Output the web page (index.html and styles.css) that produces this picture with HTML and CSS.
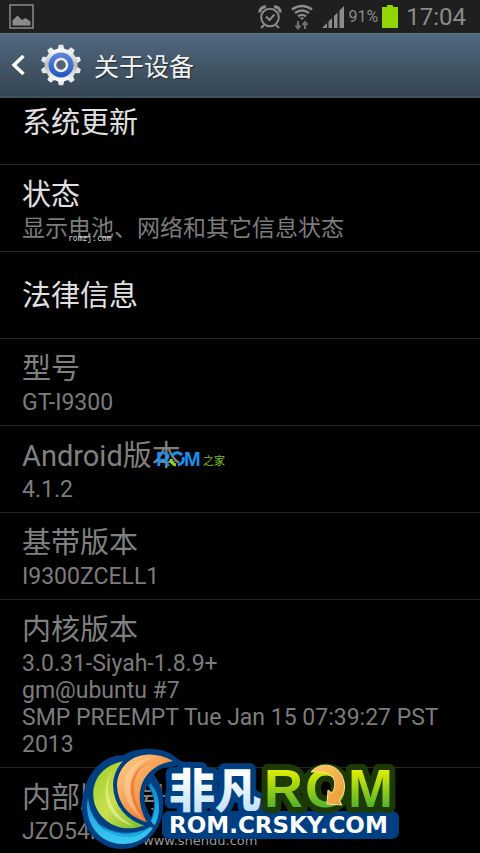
FILE: index.html
```html
<!DOCTYPE html>
<html lang="zh-CN">
<head>
  <meta charset="UTF-8" />
  <meta name="viewport" content="width=device-width, initial-scale=1.0"/>
  <title>关于设备</title>
  <link rel="stylesheet" href="styles.css">
</head>
<body>
  <div class="screen">
    <div class="status-bar">
      <svg class="picture-icon" width="26" height="26" viewBox="0 0 26 26">
        <rect x="1" y="1" width="23" height="23" fill="none" stroke="#8b8b8b" stroke-width="1.5"/>
        <path d="M3.500 21.500V16.500L8.500 11.500L13 16L16.500 14L21.500 17.500V21.500Z" fill="#8b8b8b"/>
      </svg>
      <div class="status-icons">
        <svg width="24" height="26" viewBox="0 0 24 26" fill="none" stroke="#8b8b8b" stroke-width="2">
          <circle cx="12" cy="13.500" r="8.800"/>
          <path d="M8 12.500l3.500 3.500 5-5.500M6 21l-3 3M18 21l3 3"/>
          <path d="M2 8.500A5 5 0 0 1 8 3M22 8.500A5 5 0 0 0 16 3" stroke-width="3"/>
        </svg>
        <svg class="wifi-icon" width="24" height="26" viewBox="0 0 24 26" fill="none" stroke="#8b8b8b" stroke-width="2.400">
          <path d="M2 5.500Q12-1.500 22 5.500M5 9Q12 4 19 9M8 12.300Q12 9.500 16 12.300"/>
          <path d="M9.500 13.500h5L12 16Z" fill="#8b8b8b" stroke="none"/>
          <path d="M8 17v7M5.500 21.500l2.500 3 2.500-3M15 25v-7M12.500 21l2.500-3 2.500 3" stroke="#6e6e6e" stroke-width="2"/>
        </svg>
        <svg width="23" height="26" viewBox="0 0 23 26" fill="#8b8b8b">
          <path d="M0 24L5 19V24ZM6.500 17.500L10 14V24H6.500ZM12 12L15.500 8.500V24H12ZM17.500 6.500L22 2V24H17.500Z"/>
        </svg>
        <span class="percent">91%</span>
        <svg width="16" height="26" viewBox="0 0 16 26" fill="#93d500">
          <path d="M0 3H5V1H11V3H16V24H0Z"/>
        </svg>
        <span class="clock">17:04</span>
      </div>
    </div>

    <div class="header">
      <button class="back" aria-label="返回">
        <svg width="14" height="22" viewBox="0 0 14 22" fill="none" stroke="#fff" stroke-width="3.500">
          <path d="M12.500 2L3 11l9.500 9"/>
        </svg>
      </button>
      <svg class="gear" width="42" height="42" viewBox="0 0 42 42">
        <defs>
          <linearGradient id="metal" x1="0" y1="0" x2="0" y2="1">
            <stop offset="0" stop-color="#fff"/>
            <stop offset=".5" stop-color="#b9bbbe"/>
            <stop offset="1" stop-color="#fff"/>
          </linearGradient>
          <linearGradient id="blue" x1="0" y1="0" x2="0" y2="1">
            <stop offset="0" stop-color="#6286da"/>
            <stop offset="1" stop-color="#2256bc"/>
          </linearGradient>
          <path id="tooth" d="M17.500 6L18.800 .8H23.200L24.500 6Z"/>
        </defs>
        <g fill="#e7e8ea">
          <use href="#tooth"/>
          <use href="#tooth" transform="rotate(36 21 21)"/>
          <use href="#tooth" transform="rotate(72 21 21)"/>
          <use href="#tooth" transform="rotate(108 21 21)"/>
          <use href="#tooth" transform="rotate(144 21 21)"/>
          <use href="#tooth" transform="rotate(180 21 21)"/>
          <use href="#tooth" transform="rotate(216 21 21)"/>
          <use href="#tooth" transform="rotate(252 21 21)"/>
          <use href="#tooth" transform="rotate(288 21 21)"/>
          <use href="#tooth" transform="rotate(324 21 21)"/>
        </g>
        <circle cx="21" cy="21" r="16.500" fill="url(#metal)"/>
        <circle cx="21" cy="21" r="12.500" fill="url(#blue)"/>
        <circle cx="21" cy="21" r="6" fill="#526274" stroke="#e9edf3" stroke-width="2.500"/>
      </svg>
      <h1>关于设备</h1>
    </div>

    <ul class="list">
      <li><a class="row single first" href="#"><span class="title">系统更新</span></a></li>
      <li><a class="row" href="#"><span class="title">状态</span><span class="summary">显示电池、网络和其它信息状态</span></a></li>
      <li><a class="row single" href="#"><span class="title">法律信息</span></a></li>
      <li class="row info"><span class="title">型号</span><span class="summary">GT-I9300</span></li>
      <li class="row info"><span class="title">Android版本</span><span class="summary">4.1.2</span></li>
      <li class="row info"><span class="title">基带版本</span><span class="summary">I9300ZCELL1</span></li>
      <li class="row info"><span class="title">内核版本</span><span class="summary">3.0.31-Siyah-1.8.9+<br>gm@ubuntu #7<br>SMP PREEMPT Tue Jan 15 07:39:27 PST 2013</span></li>
      <li class="row info"><span class="title">内部版本号</span><span class="summary">JZO54K</span></li>
    </ul>

    <!-- watermarks on top of the list -->
    <span class="mark mark-romzj">romzj.com</span>
    <span class="mark mark-shendu">www.shendu.com</span>
    <svg class="mark mark-rom" width="76" height="26" viewBox="0 0 76 26">
      <g class="rom-small">
        <text x="1" y="19">R</text>
        <text x="29" y="19">M</text>
      </g>
      <g fill="none" stroke-width="3">
        <path d="M17 9A6 6 0 0 1 27 8" stroke="#1b8fef"/>
        <path d="M28 10A6 6 0 0 1 23 18" stroke="#1b8fef"/>
        <path d="M16 12A6 6 0 0 0 21 18" stroke="#8fd71d"/>
      </g>
      <text class="zhijia" x="48" y="18">之家</text>
    </svg>

    <svg class="mark mark-crsky" width="320" height="106" viewBox="0 0 320 106">
      <defs>
        <linearGradient id="leaf" x1="0" y1="0" x2="1" y2="1">
          <stop offset="0" stop-color="#9dcc25"/>
          <stop offset=".5" stop-color="#c8df50"/>
          <stop offset="1" stop-color="#74b82a"/>
        </linearGradient>
        <linearGradient id="flame" x1="0" y1="0" x2="1" y2="1">
          <stop offset="0" stop-color="#ffd28c"/>
          <stop offset=".5" stop-color="#f59a4b"/>
          <stop offset="1" stop-color="#e94e1b"/>
        </linearGradient>
        <linearGradient id="wave" x1="0" y1="0" x2="0" y2="1">
          <stop offset="0" stop-color="#0788d3"/>
          <stop offset="1" stop-color="#3ccbf0"/>
        </linearGradient>
        <linearGradient id="ice" x1="0" y1="0" x2="0" y2="1">
          <stop offset=".3" stop-color="#fff"/>
          <stop offset="1" stop-color="#b5dbf8"/>
        </linearGradient>
        <linearGradient id="lime" x1="0" y1="0" x2="0" y2="1">
          <stop offset=".2" stop-color="#e0ee00"/>
          <stop offset=".8" stop-color="#55b52c"/>
        </linearGradient>
        <linearGradient id="gold" x1="0" y1="0" x2="1" y2="1">
          <stop offset="0" stop-color="#ffc95f"/>
          <stop offset="1" stop-color="#e99a38"/>
        </linearGradient>
      </defs>

      <path fill-rule="evenodd" d="M0 61C0 30 18 8 42 8C56-1 86-1 96 13Q98 20 88 20C80 20 75 22 72 28C80 38 82 48 81 61C80 84 62 102 40 102C18 102 0 84 0 61ZM64 38C71 45 75 56 69 70C62 60 60 48 64 38Z" fill="#003f82"/>
      <path d="M6 50C1 75 17 97 41 97C63 97 78 79 77 59C77 49 73 41 68 36C67 38 67 39 68 41C75 53 74 67 66 79C54 91 35 91 22 82C13 75 7 64 6 50Z" fill="url(#wave)"/>
      <path d="M7 60C14 84 42 92 66 80C54 97 20 92 7 60Z" fill="#0878c2"/>
      <path d="M18 77C30 88 46 89 63 83C50 94 30 92 18 77Z" fill="#1dace0"/>
      <path d="M43 14C16 18 7 40 13 58C20 77 42 87 63 78C37 67 28 39 43 14Z" fill="url(#leaf)" stroke="#003f82" stroke-width="8" paint-order="stroke"/>
      <path d="M36 18C18 34 24 66 52 79C22 73 14 38 36 18Z" fill="#eef49c" opacity=".65"/>
      <path d="M91 14C63 -1 37 12 35 37C35 58 49 71 65 75C51 52 56 20 91 14Z" fill="url(#flame)" stroke="#003f82" stroke-width="8" paint-order="stroke"/>
      <path d="M80 10C49 10 37 42 62 73C28 49 40 8 80 10Z" fill="#fff" opacity=".25"/>
      <path d="M76 13C49 17 44 48 65 75C39 51 45 17 76 13Z" fill="#ef7130" opacity=".7"/>

      <rect x="80" y="64" width="237" height="28" rx="7" fill="#003f82"/>
      <text class="feifan" x="87" y="60">非凡</text>
      <g class="rom-big">
        <text x="182" y="60">R</text>
        <text x="223" y="60">O</text>
        <text x="266" y="60">M</text>
      </g>
      <path d="M229 25C239 13 259 17 262 35C264 43 260 50 257 53L260 58L245 57L246 43L250 46C254 40 254 31 248 28C242 24 237 25 229 25Z" fill="url(#gold)" stroke="#ffdf9a" stroke-width="1"/>
      <text class="domain" x="87" y="86">ROM.CRSKY.COM</text>
    </svg>
  </div>
</body>
</html>
```
FILE: styles.css
```css
* {
  box-sizing: border-box;
}

body {
  margin: 0;
  background: black;
  color: #e6e6e6;
  font-family: Roboto, "Noto Sans CJK SC", sans-serif;
}

.screen {
  position: relative;
  height: 100vh;
  overflow: hidden;
}

.status-bar {
  display: flex;
  align-items: center;
  justify-content: space-between;
  height: 33px;
  padding: 0 14px 0 9px;
  background: #1f1f1f;
  color: #8b8b8b;
}

.status-icons {
  display: flex;
  align-items: center;
  gap: 4px;
}

.status-icons svg:first-child {
  margin-right: 4px;
}

.wifi-icon {
  margin-right: 4px;
}

.percent {
  font-size: 16px;
}

.clock {
  padding-left: 4px;
  font-size: 24px;
}

.header {
  display: flex;
  align-items: center;
  height: 65px;
  padding-left: 11px;
  background: linear-gradient(#50687f, #364552);
  border-top: 1px solid #5e7285;
  border-bottom: 2px solid #3e5260;
}

.back {
  display: flex;
  padding: 0;
  background: none;
  border: 0;
  cursor: pointer;
}

.gear {
  margin: 0 12px 0 15px;
}

h1 {
  margin: 0;
  font-size: 25px;
  font-weight: 400;
  color: #f4f4f4;
  text-shadow: 1px 1px 1px #1d2730;
}

.list {
  margin: 0;
  padding: 0;
  list-style: none;
}

.row {
  display: flex;
  flex-direction: column;
  min-height: 87px;
  padding: 10px 22px 9px;
  border-bottom: 1px solid #262626;
  color: #e0e0e0;
  text-decoration: none;
}

.row.single {
  justify-content: center;
}

/* scrolled partly under the header */
.row.first {
  justify-content: flex-start;
  min-height: 67px;
  padding-top: 5px;
}

.title {
  font-size: 29px;
  font-weight: 400;
  line-height: 40px;
}

.summary {
  font-size: 23px;
  font-weight: 400;
  line-height: 27px;
  color: #7c7c7c;
}

.info {
  color: #808080;
}

.mark {
  position: absolute;
}

.mark-romzj {
  left: 68px;
  top: 234px;
  font: 8px/10px "DejaVu Sans Mono", monospace;
  color: #ddd;
}

.mark-shendu {
  left: 143px;
  bottom: 4px;
  font: 13px/16px "DejaVu Sans", sans-serif;
  color: #999;
}

.mark-rom {
  left: 155px;
  top: 447px;
}

.rom-small {
  font: bold 20px "Liberation Sans", sans-serif;
  fill: #1b8fef;
}

.zhijia {
  font: 11px "Noto Sans CJK SC", sans-serif;
  fill: #7cc01c;
}

.mark-crsky {
  left: 82px;
  bottom: 0;
}

.feifan {
  font: 900 46px "Noto Sans CJK SC", sans-serif;
  fill: url(#ice);
  stroke: #003f82;
  stroke-width: 12px;
  stroke-linejoin: round;
  paint-order: stroke;
}

.rom-big {
  font: bold 54px "Liberation Sans", sans-serif;
  fill: url(#lime);
  stroke: #1d3a05;
  stroke-width: 12px;
  stroke-linejoin: round;
  paint-order: stroke;
}

.domain {
  font: bold 23px "DejaVu Sans", sans-serif;
  fill: #fff;
}
```
